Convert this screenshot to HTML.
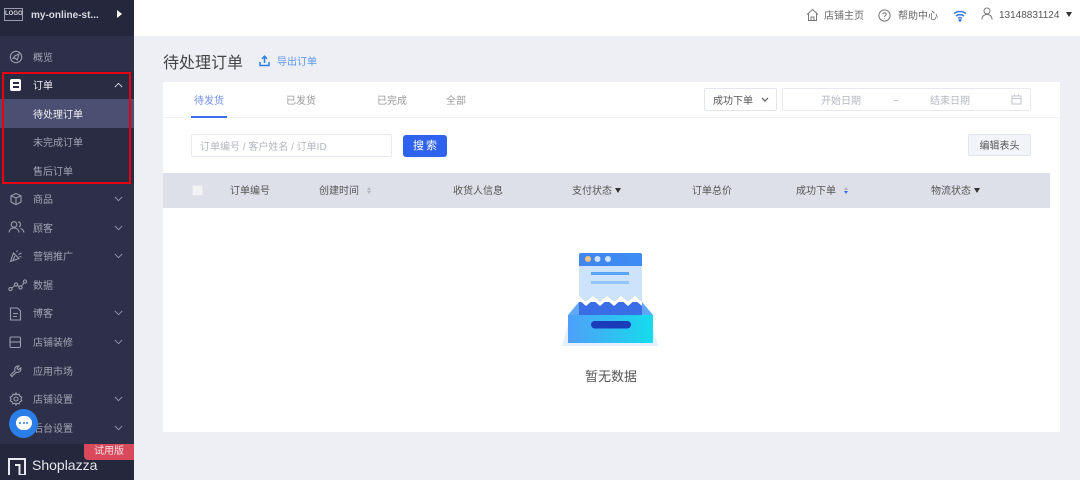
<!DOCTYPE html>
<html lang="zh-CN">
<head>
<meta charset="utf-8">
<title>待处理订单</title>
<style>
*{box-sizing:border-box;margin:0;padding:0}
html,body{width:1080px;height:480px;overflow:hidden;background:#eeeff5;font-family:"Liberation Sans","Noto Sans CJK SC",sans-serif;}
#root{position:absolute;left:0;top:0;width:1080px;height:480px;filter:blur(.35px)}
.a{position:absolute;white-space:nowrap}
#side{position:absolute;left:0;top:0;width:134px;height:480px;background:#2e3049;overflow:hidden}
#side .t{position:absolute;left:33px;font-size:10px;line-height:16px;color:#a3a5b5;white-space:nowrap}
#side svg{position:absolute;fill:none;stroke:#9a9cad;stroke-width:1.1}
.chev{left:114px;width:9px;height:6px}
</style>
</head>
<body>
<div id="root">
<div id="side">
  <div class="a" style="left:0;top:0;width:134px;height:36px;background:#25273c"></div>
  <div class="a" style="left:4px;top:8px;width:19px;height:13px;border:1px solid #9a9cad;color:#d5d6de;font-size:6px;line-height:11px;text-align:center;font-weight:bold;letter-spacing:0">LOGO</div>
  <div class="a" style="left:31px;top:8px;font-size:10px;line-height:16px;font-weight:bold;color:#d8d9e0">my-online-st...</div>
  <div class="a" style="left:117px;top:10px;width:0;height:0;border-left:5px solid #fff;border-top:4px solid transparent;border-bottom:4px solid transparent"></div>

  <div class="a" style="left:0;top:99px;width:134px;height:29px;background:#4b4f72"></div>
  <div class="a" style="left:0;top:128px;width:134px;height:56px;background:#2a2c44"></div>
  <div class="a" style="left:0;top:71px;width:134px;height:28px;background:#2a2c44"></div>

  <svg style="left:9px;top:50px" width="14" height="14" viewBox="0 0 14 14"><circle cx="7" cy="7" r="5.7"/><path d="M10 4 5.800 6 4 8.400 6.400 8.200 8.200 10Z"/></svg>
  <div class="t" style="top:51px">概览</div>

  <div class="a" style="left:10px;top:79px;width:11px;height:12px;border-radius:2px;background:#fff"></div>
  <div class="a" style="left:12.5px;top:82px;width:6px;height:1.5px;background:#2a2c44"></div>
  <div class="a" style="left:12.5px;top:86px;width:6px;height:1.5px;background:#2a2c44"></div>
  <div class="t" style="top:79px;color:#ecedf2">订单</div>
  <svg class="chev" style="top:82px;stroke:#e2e3ea" viewBox="0 0 11 7"><path d="M1 6 5.500 1.500 10 6"/></svg>
  <div class="t" style="top:108px;color:#f0f1f5">待处理订单</div>
  <div class="t" style="top:136px">未完成订单</div>
  <div class="t" style="top:165px">售后订单</div>

  <svg style="left:9px;top:192px" width="14" height="14" viewBox="0 0 14 14"><path d="M7 1.500 12 3.800V10L7 12.600 2 10V3.800ZM2 3.800 7 6 12 3.800M7 6V12.600"/></svg>
  <div class="t" style="top:193px">商品</div>
  <svg class="chev" style="top:196px" viewBox="0 0 11 7"><path d="M1 1 5.500 5.500 10 1"/></svg>

  <svg style="left:8px;top:220px" width="17" height="14" viewBox="0 0 17 14"><circle cx="6" cy="4.500" r="2.800"/><path d="M1 12.500C1.500 9 3.500 8 6 8S10.500 9 11 12.500M10 2C12.500 1.500 13.500 5.500 11 7M12.500 8.500C14.500 9 15.500 10.500 16 12.500"/></svg>
  <div class="t" style="top:222px">顾客</div>
  <svg class="chev" style="top:225px" viewBox="0 0 11 7"><path d="M1 1 5.500 5.500 10 1"/></svg>

  <svg style="left:9px;top:249px" width="14" height="14" viewBox="0 0 14 14"><path d="M1.500 12.500 4.500 4 10 9.500ZM6 7 4 11M7.500 3 8.500 1.500M9.500 5.500 12.500 4M10.500 7.500 12.500 8"/></svg>
  <div class="t" style="top:250px">营销推广</div>
  <svg class="chev" style="top:253px" viewBox="0 0 11 7"><path d="M1 1 5.500 5.500 10 1"/></svg>

  <svg style="left:8px;top:279px" width="20" height="13" viewBox="0 0 20 13"><circle cx="2.500" cy="10" r="1.600"/><circle cx="8" cy="5.500" r="1.600"/><circle cx="12.500" cy="8.500" r="1.600"/><circle cx="17" cy="2.500" r="1.600"/><path d="M3.800 9 6.800 6.500M9.300 6.400 11.200 7.600M13.500 7.200 16 3.800"/></svg>
  <div class="t" style="top:279px">数据</div>

  <svg style="left:9px;top:307px" width="13" height="14" viewBox="0 0 13 14"><path d="M1.500 1H8.500L11.500 4V13H1.500ZM4 6.500H9M4 9.500H8"/></svg>
  <div class="t" style="top:307px">博客</div>
  <svg class="chev" style="top:310px" viewBox="0 0 11 7"><path d="M1 1 5.500 5.500 10 1"/></svg>

  <svg style="left:9px;top:336px" width="13" height="13" viewBox="0 0 13 13"><rect x="1" y="1" width="10.500" height="10.500" rx="1.500"/><path d="M1 6H11.500"/></svg>
  <div class="t" style="top:336px">店铺装修</div>
  <svg class="chev" style="top:339px" viewBox="0 0 11 7"><path d="M1 1 5.500 5.500 10 1"/></svg>

  <svg style="left:9px;top:364px" width="14" height="14" viewBox="0 0 14 14"><path d="M1.500 11 6 6.800C5 4 7 1.500 10 2L8 4.200 9.500 5.800 11.800 3.800C12.400 7 10 9 7.300 8.200L3 12.500Z"/></svg>
  <div class="t" style="top:365px">应用市场</div>

  <svg style="left:9px;top:392px" width="14" height="14" viewBox="0 0 14 14"><path d="M7 1 8 2.700 10.200 2.200 10.800 4.200 12.800 5 12 7 12.800 9 10.800 9.800 10.200 11.800 8 11.300 7 13 6 11.300 3.800 11.800 3.200 9.800 1.200 9 2 7 1.200 5 3.200 4.200 3.800 2.200 6 2.700Z"/><circle cx="7" cy="7" r="2"/></svg>
  <div class="t" style="top:393px">店铺设置</div>
  <svg class="chev" style="top:396px" viewBox="0 0 11 7"><path d="M1 1 5.500 5.500 10 1"/></svg>

  <div class="t" style="top:422px">后台设置</div>
  <svg class="chev" style="top:425px" viewBox="0 0 11 7"><path d="M1 1 5.500 5.500 10 1"/></svg>

  <div class="a" style="left:0;top:444px;width:134px;height:36px;background:#25273c"></div>
  <div class="a" style="left:84px;top:444px;width:50px;height:16px;background:#d9495c;border-radius:0 0 0 4px;color:#f6dfe2;font-size:10px;line-height:16px;text-align:center">试用版</div>
  <svg style="left:8px;top:458px;stroke:#e8e9ee;stroke-width:2" width="18" height="17" viewBox="0 0 18 17"><path d="M1 17V1H17V17H11.500V7H7"/></svg>
  <div class="a" style="left:32px;top:455px;font-size:14px;line-height:20px;color:#e4e5ea">Shoplazza</div>

  <div class="a" style="left:9px;top:409px;width:29px;height:29px;border-radius:50%;background:#2b7de9"></div>
  <div class="a" style="left:15.5px;top:416px;width:16px;height:14px;border-radius:7px;background:#fff"></div>
  <div class="a" style="left:19px;top:422px;width:2px;height:2px;border-radius:50%;background:#2b7de9"></div>
  <div class="a" style="left:22.5px;top:422px;width:2px;height:2px;border-radius:50%;background:#2b7de9"></div>
  <div class="a" style="left:26px;top:422px;width:2px;height:2px;border-radius:50%;background:#2b7de9"></div>
</div>

<div class="a" style="left:2px;top:72px;width:129px;height:112px;border:2px solid #e60012"></div>

<!-- top bar -->
<div class="a" style="left:134px;top:0;width:946px;height:36px;background:#fff"></div>
<svg class="a" style="left:806px;top:8px;fill:none;stroke:#777" width="13" height="14" viewBox="0 0 13 14"><path d="M1 6.500 6.500 1.500 12 6.500M2.500 5.500V12.500H10.500V5.500M5 12.500V9H8V12.500"/></svg>
<div class="a" style="left:824px;top:9px;font-size:10px;line-height:16px;color:#666">店铺主页</div>
<svg class="a" style="left:878px;top:9px;fill:none;stroke:#777" width="13" height="13" viewBox="0 0 13 13"><circle cx="6.500" cy="6.500" r="5.600"/><path d="M4.800 5C5 3.400 8.200 3.400 8.200 5.200 8.200 6.400 6.500 6.400 6.500 8"/><path d="M6.500 9.200V10"/></svg>
<div class="a" style="left:898px;top:9px;font-size:10px;line-height:16px;color:#666">帮助中心</div>
<svg class="a" style="left:953px;top:10px;fill:none;stroke:#3a7ce8;stroke-width:1.500" width="14" height="12" viewBox="0 0 14 12"><path d="M1 3.500C4.500 .8 9.500 .8 13 3.500M3 6C5.500 4.200 8.500 4.200 11 6M5 8.300C6.200 7.400 7.800 7.400 9 8.300"/><circle cx="7" cy="10.300" r=".7"/></svg>
<svg class="a" style="left:981px;top:7px;fill:none;stroke:#777" width="12" height="13" viewBox="0 0 12 13"><circle cx="6" cy="4" r="3"/><path d="M.8 12.500C1.200 8.800 3.200 7.500 6 7.500S10.800 8.800 11.200 12.500"/></svg>
<div class="a" style="left:999px;top:8px;font-size:10px;line-height:16px;color:#555">13148831124</div>
<div class="a" style="left:1066px;top:12px;width:0;height:0;border-top:5px solid #333;border-left:3px solid transparent;border-right:3px solid transparent"></div>

<!-- page title -->
<div class="a" style="left:163px;top:52px;font-size:16px;line-height:24px;color:#444">待处理订单</div>
<svg class="a" style="left:259px;top:55px;fill:none;stroke:#2f7de8;stroke-width:1.500" width="11" height="12" viewBox="0 0 11 12"><path d="M5.500 8V1.500M3 3.800 5.500 1.200 8 3.800M1 7V10.500H10V7"/></svg>
<div class="a" style="left:277px;top:55px;font-size:10px;line-height:16px;color:#5b97ef">导出订单</div>

<!-- card -->
<div class="a" style="left:163px;top:82px;width:897px;height:350px;background:#fff"></div>
<div class="a" style="left:163px;top:117px;width:897px;height:1px;background:#f0f1f5"></div>
<div class="a" style="left:194px;top:94px;font-size:10px;line-height:16px;color:#6f8ff0">待发货</div>
<div class="a" style="left:191px;top:116px;width:36px;height:1.500px;background:#3e6ef0"></div>
<div class="a" style="left:286px;top:94px;font-size:10px;line-height:16px;color:#999">已发货</div>
<div class="a" style="left:377px;top:94px;font-size:10px;line-height:16px;color:#999">已完成</div>
<div class="a" style="left:446px;top:94px;font-size:10px;line-height:16px;color:#999">全部</div>

<div class="a" style="left:704px;top:88px;width:73px;height:23px;border:1px solid #e4e6ee;border-radius:2px"></div>
<div class="a" style="left:713px;top:94px;font-size:10px;line-height:16px;color:#555">成功下单</div>
<svg class="a" style="left:761px;top:97px;fill:none;stroke:#555;stroke-width:1.200" width="8" height="5" viewBox="0 0 8 5"><path d="M1 1 4 4 7 1"/></svg>
<div class="a" style="left:782px;top:88px;width:249px;height:23px;border:1px solid #e8e9f0;border-radius:2px"></div>
<div class="a" style="left:821px;top:94px;font-size:10px;line-height:16px;color:#b5b7c0">开始日期</div>
<div class="a" style="left:893px;top:94px;font-size:10px;line-height:16px;color:#b5b7c0">~</div>
<div class="a" style="left:930px;top:94px;font-size:10px;line-height:16px;color:#b5b7c0">结束日期</div>
<svg class="a" style="left:1011px;top:94px;fill:none;stroke:#c2c4cc" width="11" height="11" viewBox="0 0 11 11"><rect x="1" y="2" width="9" height="8"/><path d="M1 4.500H10M3.500 .5V2.500M7.500 .5V2.500"/></svg>

<div class="a" style="left:191px;top:134px;width:201px;height:23px;border:1px solid #e8e9f0;border-radius:2px"></div>
<div class="a" style="left:200px;top:140px;font-size:10px;line-height:16px;color:#b5b7c0">订单编号 / 客户姓名 / 订单ID</div>
<div class="a" style="left:403px;top:135px;width:44px;height:22px;background:#2f62ee;border-radius:3px;color:#fff;font-size:11px;line-height:23px;text-align:center;letter-spacing:2px;padding-left:2px">搜索</div>
<div class="a" style="left:968px;top:134px;width:63px;height:22px;background:#f3f4f9;border:1px solid #e4e6ee;border-radius:2px;color:#555;font-size:10px;line-height:24px;text-align:center">编辑表头</div>

<!-- table head -->
<div class="a" style="left:163px;top:173px;width:887px;height:35px;background:#dee0e9"></div>
<div class="a" style="left:192px;top:185px;width:11px;height:11px;background:#f2f3f5;border:1px solid #e6e7ec;border-radius:1px"></div>
<div class="a" style="left:230px;top:184px;font-size:10px;line-height:16px;color:#555">订单编号</div>
<div class="a" style="left:319px;top:184px;font-size:10px;line-height:16px;color:#555">创建时间</div>
<div class="a" style="left:367px;top:187px;width:0;height:0;border-bottom:3px solid #b0b2bb;border-left:2.500px solid transparent;border-right:2.500px solid transparent"></div>
<div class="a" style="left:367px;top:191px;width:0;height:0;border-top:3px solid #b0b2bb;border-left:2.500px solid transparent;border-right:2.500px solid transparent"></div>
<div class="a" style="left:453px;top:184px;font-size:10px;line-height:16px;color:#555">收货人信息</div>
<div class="a" style="left:572px;top:184px;font-size:10px;line-height:16px;color:#555">支付状态</div>
<div class="a" style="left:615px;top:188px;width:0;height:0;border-top:5px solid #333;border-left:3px solid transparent;border-right:3px solid transparent"></div>
<div class="a" style="left:692px;top:184px;font-size:10px;line-height:16px;color:#555">订单总价</div>
<div class="a" style="left:796px;top:184px;font-size:10px;line-height:16px;color:#555">成功下单</div>
<div class="a" style="left:844px;top:187px;width:0;height:0;border-bottom:3px solid #b0b2bb;border-left:2.500px solid transparent;border-right:2.500px solid transparent"></div>
<div class="a" style="left:844px;top:191px;width:0;height:0;border-top:3px solid #3e6ef0;border-left:2.500px solid transparent;border-right:2.500px solid transparent"></div>
<div class="a" style="left:931px;top:184px;font-size:10px;line-height:16px;color:#555">物流状态</div>
<div class="a" style="left:974px;top:188px;width:0;height:0;border-top:5px solid #333;border-left:3px solid transparent;border-right:3px solid transparent"></div>

<!-- empty illustration -->
<svg class="a" style="left:560px;top:250px" width="100" height="100" viewBox="560 250 100 100">
  <defs>
    <linearGradient id="g" x1="0" x2="1" y1="0" y2="0"><stop offset="0" stop-color="#4f9ff8"/><stop offset="1" stop-color="#15dcec"/></linearGradient>
    <linearGradient id="h" x1="0" x2="1" y1="0" y2="0"><stop offset="0" stop-color="#4186ee"/><stop offset="1" stop-color="#3c8cf5"/></linearGradient>
  </defs>
  <path d="M568 325 562 346H658L652 325Z" fill="#e4f0fc"/>
  <path d="M568 315 579 302H642L653 315Z" fill="#5fa8f7"/>
  <path d="M579 302H642V315H579Z" fill="#3a6de6"/>
  <path d="M579 266H642V302L635 296 628 302 621 296 614 302 607 296 600 302 593 296 586 302 579 296Z" fill="#cde2fb"/>
  <path d="M579 300 586 306 593 300 600 306 607 300 614 306 621 300 628 306 635 300 642 306V302L635 296 628 302 621 296 614 302 607 296 600 302 593 296 586 302 579 296Z" fill="#fff"/>
  <path d="M581 253H640Q642 253 642 255V266H579V255Q579 253 581 253Z" fill="url(#h)"/>
  <circle cx="588" cy="259" r="3" fill="#f6c27c"/>
  <circle cx="597.500" cy="259" r="3" fill="#cfe2fb"/>
  <circle cx="608" cy="259" r="3" fill="#cfe2fb"/>
  <rect x="591" y="272" width="38" height="3" fill="#5aa5f5"/>
  <rect x="591" y="281" width="38" height="3" fill="#93c4f9"/>
  <rect x="568" y="315" width="85" height="28" fill="url(#g)"/>
  <rect x="591" y="321" width="40" height="7.500" rx="3.700" fill="#1b3cba"/>
</svg>
<div class="a" style="left:585px;top:367px;font-size:13px;line-height:20px;color:#555">暂无数据</div>
</div>
</body>
</html>
